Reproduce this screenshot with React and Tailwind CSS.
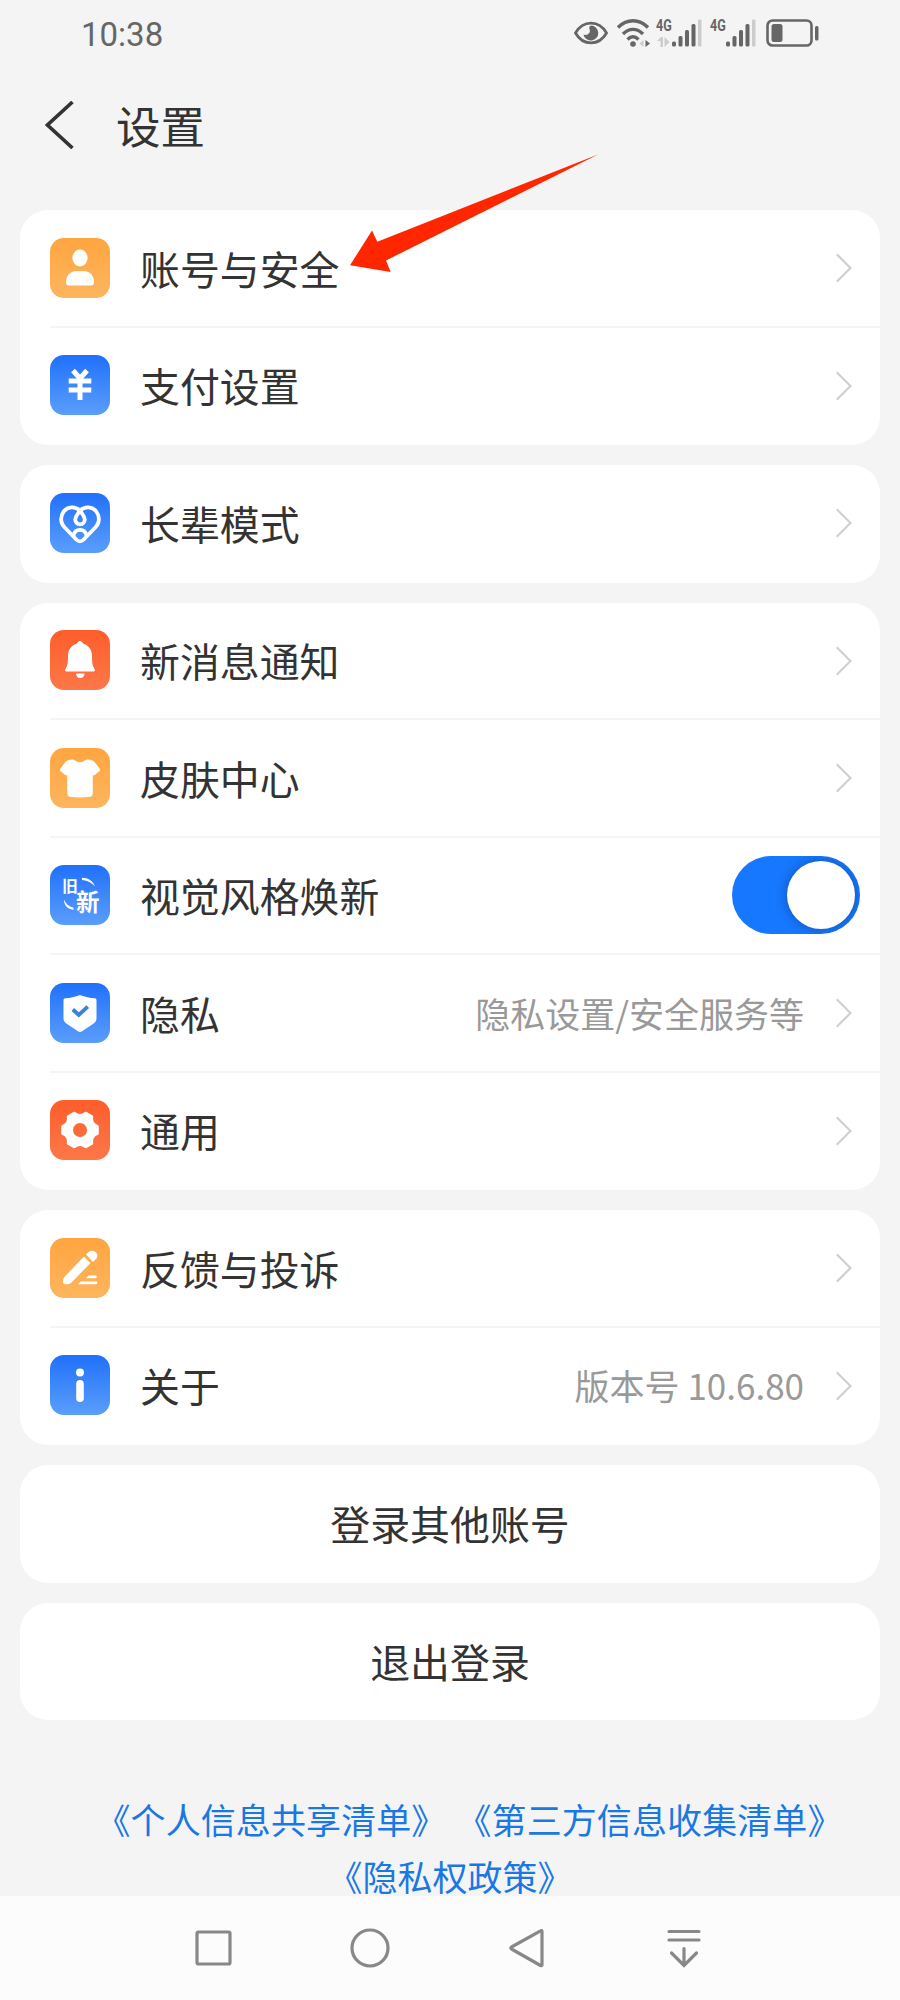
import { useState } from "react"

const gradients = {
  orange: "bg-gradient-to-b from-[#ffa540] to-[#fdb55c]",
  blue: "bg-gradient-to-b from-[#1f70fb] to-[#5a9dfb]",
  red: "bg-gradient-to-b from-[#fe5d2a] to-[#fd7748]",
}

const UserIcon = () => (
  <svg viewBox="0 0 60 60" className="size-full" fill="#fff">
    <ellipse cx="30" cy="20" rx="7.6" ry="8.5" />
    <path d="M26 33h8c6 0 10 5 10 11 0 2.500-1 3.500-3 3.500H19c-2 0-3-1-3-3.500 0-6 4-11 10-11z" />
  </svg>
)

const YenIcon = () => (
  <svg viewBox="0 0 60 60" className="size-full" fill="none" stroke="#fff" strokeWidth="5">
    <path d="M23 15.500l7 8 7-8M18.700 26h22.600M18.700 35h22.600M30 23v22" />
  </svg>
)

const HeartIcon = () => (
  <svg viewBox="0 0 60 60" className="size-full" fill="none" stroke="#fff" strokeWidth="3.800" strokeLinejoin="round" strokeLinecap="round">
    <path d="M30 17.500c-5-4.500-12.500-4-16.300 1-4 5.500-3 12 1 16l11.600 12c2.500 2.500 4.900 2.500 7.400 0l11.600-12c4-4 5-10.500 1-16-3.800-5-11.300-5.500-16.300-1z" />
    <path d="M30 17.500c-2 3.500-4.800 5.500-4.800 9a4.800 4.800 0 009.600 0c0-3.500-2.800-5.500-4.800-9z" />
    <path d="M23.500 42.500c1-4.500 3.500-5.700 6.500-5.700s5.500 1.200 6.500 5.700" />
  </svg>
)

const BellIcon = () => (
  <svg viewBox="0 0 60 60" className="size-full" fill="#fff">
    <path d="M30 11c1.500 0 2.500 1 3 2.500C38.500 15 42 19.500 42 26c0 6 .3 10 2.500 13 .9 1.300.5 2.500-1 2.500h-27c-1.500 0-1.900-1.200-1-2.500C17.700 36 18 32 18 26c0-6.500 3.500-11 9-12.500.5-1.500 1.500-2.500 3-2.500z" />
    <path d="M26 43.500h8.500c0 2.700-1.800 4.500-4.200 4.500S26 46.200 26 43.500z" />
  </svg>
)

const ShirtIcon = () => (
  <svg viewBox="0 0 60 60" className="size-full" fill="#fff">
    <path d="M22 11.500c1.500 0 2 .3 3 1 3 2.300 7 2.300 10 0 1-.7 1.500-1 3-1 3 0 5 .8 7 3l4.500 6c.8 1.200.7 2-.2 2.800l-4.300 3.500c-.8.7-1.500.7-2.200.2V45c0 2.700-1.300 4-4 4-6 .5-12 .5-17.600 0-2.700 0-4-1.300-4-4V27c-.7.5-1.400.5-2.200-.2l-4.300-3.500c-.9-.8-1-1.600-.2-2.800l4.500-6c2-2.200 4-3 7-3z" />
  </svg>
)

const RefreshIcon = () => (
  <svg viewBox="0 0 60 60" className="size-full" fill="#fff" fontFamily="'Noto Sans CJK SC', sans-serif">
    <text x="12.300" y="26.500" fontSize="15.500" fontWeight="700">旧</text>
    <text x="26" y="46" fontSize="23.500" fontWeight="700">新</text>
    <path d="M32 12.800c6 0 11 3 13 8.700-4-4-7.500-6-13-6.500z" />
    <path d="M14 34.500c1.500 4 4.500 7 9.500 8.300v2c-6-.8-9.500-4.300-9.500-10.300z" />
  </svg>
)

const ShieldIcon = () => (
  <svg viewBox="0 0 60 60" className="size-full">
    <path fill="#fff" d="M30 12c5 2 10 3 14.500 3.300 1.300.1 2 .8 2 2.200V35c0 2.500-.8 4-2.800 5.500L32 48.200c-1.500.9-2.500.9-4 0l-11.700-7.700c-2-1.500-2.800-3-2.800-5.500V17.500c0-1.400.7-2.100 2-2.200C20 15 25 14 30 12z" />
    <path fill="none" stroke="#3c82d4" strokeWidth="3.800" d="M22.800 26.500l6 5.500 9-8.300" />
  </svg>
)

const GearIcon = () => (
  <svg viewBox="-30 -30 60 60" className="size-full">
    <path
      fill="#fff"
      stroke="#fff"
      strokeWidth="2.400"
      strokeLinejoin="round"
      d="M17.600-3.700L17.600 3.700Q10.800 6.250 12 13.400L5.600 17.100Q0 12.500-5.600 17.100L-12 13.400Q-10.800 6.250-17.600 3.700L-17.600-3.700Q-10.800-6.250-12-13.400L-5.600-17.100Q0-12.500 5.600-17.100L12-13.400Q10.800-6.250 17.600-3.700z"
    />
    <circle r="7" fill="#fe6a38" />
  </svg>
)

const PencilIcon = () => (
  <svg viewBox="0 0 60 60" className="size-full" fill="#fff">
    <path d="M34 18.500l6.500 6.500-18.500 19c-1.700 1.700-3 2.300-5 2.300h-1.500c-1.700 0-2.500-.8-2.500-2.500 0-2.500.5-4 2-5.500z" />
    <path d="M36 16.500l2-2c2-2 5-2.200 7.200-.7 2.300 1.600 3 4.700 1.300 6.700l-3.500 3.500z" />
    <path d="M38.500 37.500h7a1.300 1.300 0 010 2.700h-9.500zM31 43.500h15a1.300 1.300 0 010 2.700H28z" />
  </svg>
)

const InfoIcon = () => (
  <svg viewBox="0 0 60 60" className="size-full" fill="#fff">
    <circle cx="30" cy="17.500" r="4" />
    <rect x="26.200" y="25" width="7.600" height="22" rx="3.800" />
  </svg>
)

const groups = [
  [
    { label: "账号与安全", color: "orange", Icon: UserIcon },
    { label: "支付设置", color: "blue", Icon: YenIcon },
  ],
  [{ label: "长辈模式", color: "blue", Icon: HeartIcon }],
  [
    { label: "新消息通知", color: "red", Icon: BellIcon },
    { label: "皮肤中心", color: "orange", Icon: ShirtIcon },
    { label: "视觉风格焕新", color: "blue", Icon: RefreshIcon, toggle: true },
    { label: "隐私", color: "blue", Icon: ShieldIcon, note: "隐私设置/安全服务等" },
    { label: "通用", color: "red", Icon: GearIcon },
  ],
  [
    { label: "反馈与投诉", color: "orange", Icon: PencilIcon },
    { label: "关于", color: "blue", Icon: InfoIcon, note: "版本号 10.6.80" },
  ],
]

const Chevron = () => (
  <svg className="w-4 h-[30px] mr-[28px] shrink-0 mt-px" viewBox="0 0 16 30" fill="none" stroke="#cfcfcf" strokeWidth="2.200">
    <path d="M0.700 1.200L14.500 15L0.700 28.800" />
  </svg>
)

const Toggle = () => {
  const [on, setOn] = useState(true)

  return (
    <button
      onClick={() => setOn(!on)}
      className={`w-[128px] h-[78px] mr-5 rounded-full p-[5px] flex items-center overflow-hidden ${on ? "bg-[#1677ff] justify-end" : "bg-gray-300 justify-start"}`}
    >
      <span className="size-[68px] rounded-full bg-white shadow-[0_0_12px_rgba(0,0,0,0.3)]" />
    </button>
  )
}

const Row = ({ label, color, Icon, note, toggle, last }) => (
  <div className="h-[117.5px] pl-[30px]">
    <div className={`h-full flex items-center border-b-2 ${last ? "border-transparent" : "border-[#f5f5f5]"}`}>
      <div className={`size-[60px] rounded-[14px] overflow-hidden shrink-0 mr-[30px] ${gradients[color]}`}>
        <Icon />
      </div>
      <span className="flex-1 text-[39.9px] leading-[48px] text-[#333]">{label}</span>
      {note && <span className="text-[35px] leading-[42px] text-[#999] mr-[32px]">{note}</span>}
      {toggle ? <Toggle /> : <Chevron />}
    </div>
  </div>
)

const Network = () => (
  <span className="inline-block origin-left scale-x-[0.74] text-[17px] leading-[13px] font-bold font-[Roboto]">4G</span>
)

const Signal = () => (
  <svg className="w-[30px] h-[28px] shrink-0" viewBox="0 0 30 28" fill="#666">
    <rect x="0" y="22.500" width="4" height="5" rx="1.500" />
    <rect x="6.500" y="17" width="4" height="10.500" rx="1.500" />
    <rect x="13" y="11" width="4" height="16.500" rx="1.500" />
    <rect x="19.500" y="5" width="4" height="22.500" rx="1.500" />
    <rect x="26" y="0.500" width="3.500" height="27" rx="1" fill="#ccc" />
  </svg>
)

const StatusBar = () => (
  <div className="h-[66px] shrink-0 pl-[81px] pr-[80px] flex items-center justify-between text-[#666]">
    <span className="text-[33px] leading-none mt-[3px] font-[Roboto]">10:38</span>
    <div className="flex items-center">
      <svg className="w-[34px] h-[24px] mr-[9px]" viewBox="0 0 34 24">
        <path d="M1.500 12C9-1.200 25-1.200 32.500 12 25 25.200 9 25.200 1.500 12z" fill="none" stroke="#666" strokeWidth="2.800" />
        <path d="M17 4.500a7.500 7.500 0 11-7.600 9c4 1.500 8-1.500 6-5.700-.4-1-.2-2.500 1.600-3.300z" fill="#666" />
      </svg>
      <svg className="w-[34px] h-[28px] mr-[5px]" viewBox="0 0 34 28" fill="none" stroke="#666" strokeWidth="3.400">
        <path d="M1 8.500C10-.5 22-.5 31 8.500M6 15c6-6.200 14-6.200 20 0M10.500 20.500c3.500-3.500 7.500-3.500 11 0" />
        <circle cx="16" cy="25" r="2.800" fill="#666" stroke="none" />
        <path d="M28.500 21v7l4.500-3.500z" fill="#666" stroke="none" />
        <path d="M26.500 21v7l-4-3.500z" fill="#ccc" stroke="none" />
      </svg>
      <div className="w-[16px] h-[28px] flex flex-col justify-between">
        <Network />
        <svg className="w-[13px] h-[10px] ml-px" viewBox="0 0 13 10" fill="#ccc">
          <path d="M0 4l4-4h2v10H3.500V4zM7.500 0v10l5-5z" />
        </svg>
      </div>
      <Signal />
      <div className="w-[16px] h-[28px] ml-2 flex flex-col">
        <Network />
      </div>
      <Signal />
      <svg className="w-[54px] h-[28px] ml-[10px]" viewBox="0 0 54 28">
        <rect x="1.500" y="1.500" width="44" height="25" rx="5" fill="none" stroke="#666" strokeWidth="2.600" />
        <rect x="5.500" y="5" width="11" height="18" rx="2.500" fill="#666" />
        <rect x="49" y="7" width="3.500" height="14.500" rx="1.500" fill="#666" />
      </svg>
    </div>
  </div>
)

const NavBar = () => (
  <div className="h-[104px] shrink-0 bg-[#fcfcfc] flex items-center justify-between pl-[193px] pr-[196px]">
    <svg className="size-[40px]" viewBox="0 0 40 40" fill="none" stroke="#888" strokeWidth="3.200">
      <rect x="4" y="4" width="33" height="32" rx="1.500" />
    </svg>
    <svg className="size-[40px]" viewBox="0 0 40 40" fill="none" stroke="#888" strokeWidth="3.200">
      <circle cx="20" cy="20" r="18" />
    </svg>
    <svg className="size-[40px]" viewBox="0 0 40 40" fill="none" stroke="#888" strokeWidth="3.200" strokeLinejoin="round">
      <path d="M35 3.500c0-1-.6-1.300-1.500-.7L4.500 19c-1 .6-1 1.400 0 2l29 16.500c.9.500 1.500.2 1.500-.8z" />
    </svg>
    <svg className="size-[40px]" viewBox="0 0 40 40" fill="none" stroke="#888" strokeWidth="3.200" strokeLinecap="round">
      <path d="M5 3.500h30M5 12h30M20 20.500v16.500M7.500 25L20 37.500 32.500 25" />
    </svg>
  </div>
)

const App = () => {
  return (
    <div className="relative w-[900px] h-[2000px] overflow-hidden bg-[#f4f4f4] flex flex-col font-['Noto_Sans_CJK_SC',sans-serif]">
      <StatusBar />

      <div className="h-[144px] shrink-0 pl-[45px] flex items-start">
        <svg className="w-[29px] h-[48px] mt-[35px]" viewBox="0 0 29 48" fill="none" stroke="#333" strokeWidth="3.600">
          <path d="M27.500 1L2.500 24L27.500 47" />
        </svg>
        <h1 className="ml-[42px] mt-[32px] text-[44.500px] leading-[54px] text-[#333]">设置</h1>
      </div>

      <div className="shrink-0 px-5 flex flex-col gap-5">
        {groups.map((rows, i) => (
          <div key={i} className="bg-white rounded-[28px]">
            {rows.map((row, j) => (
              <Row key={row.label} {...row} last={j === rows.length - 1} />
            ))}
          </div>
        ))}
        <button className="h-[117.5px] pb-px bg-white rounded-[28px] text-[39.9px] text-[#333]">登录其他账号</button>
        <button className="h-[117.5px] pb-px bg-white rounded-[28px] text-[39.9px] text-[#333]">退出登录</button>
      </div>

      <div className="h-[176px] shrink-0 pt-[70px] text-center text-[35px] text-[#1a78e4]">
        <div className="flex justify-center gap-[10px] pl-[38px] leading-[57px] tracking-[0.1px] whitespace-nowrap">
          <a>《个人信息共享清单》</a>
          <a>《第三方信息收集清单》</a>
        </div>
        <a className="block mt-2 leading-[41px]">《隐私权政策》</a>
      </div>

      <NavBar />

      {/* pointer over the first row */}
      <svg className="absolute left-[345px] top-[150px] w-[260px] h-[130px]" viewBox="0 0 260 130" fill="#ff2600">
        <path d="M253 4.500L32.300 91.700L27 80.500L5 115.300L45.700 122L41 110.500z" />
      </svg>
    </div>
  )
}

export default App
